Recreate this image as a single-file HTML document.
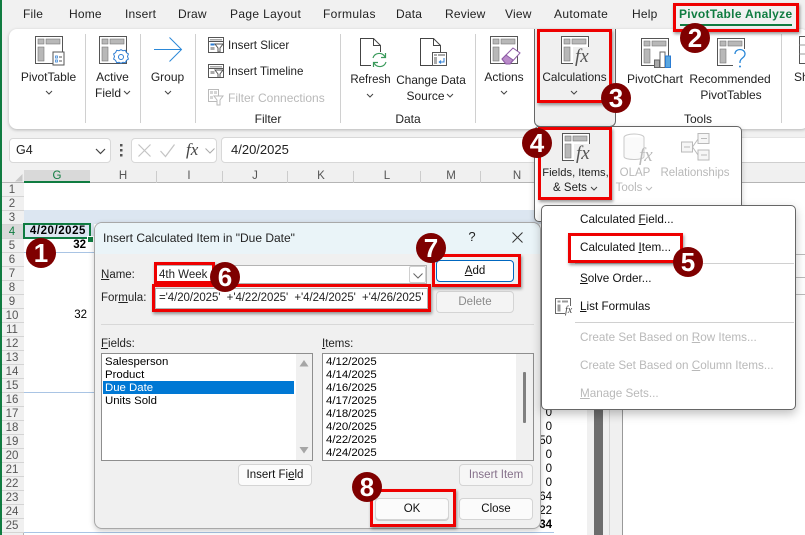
<!DOCTYPE html>
<html><head><meta charset="utf-8"><style>
html,body{margin:0;padding:0}
body{width:805px;height:535px;overflow:hidden;background:#fff;position:relative;font-family:"Liberation Sans",sans-serif;font-size:12px;color:#222}
.a{position:absolute;box-sizing:border-box}
.t{position:absolute;white-space:nowrap;line-height:14px;transform:translateY(-50%)}
.tab{letter-spacing:.2px}
.m{font-size:11.7px}
.c{position:absolute;white-space:nowrap;line-height:14px;transform:translate(-50%,-50%)}
.r{position:absolute;white-space:nowrap;line-height:14px;transform:translate(-100%,-50%);color:#000}
.g{color:#b9b9b9}
.sep{position:absolute;width:1px;top:34px;height:89px;background:#d0d0d0}
.red{position:absolute;box-sizing:border-box;border:3px solid #ee0000;box-shadow:1px 2px 3px rgba(0,0,0,.4)}
.b{position:absolute;width:30px;height:30px;border-radius:50%;background:#7f0000;color:#fff;font-weight:bold;font-size:26px;line-height:30px;text-align:center;font-family:"Liberation Sans",sans-serif}
.btn{position:absolute;box-sizing:border-box;background:#fbfbfb;border:1px solid #d4d4d4;border-radius:4px;text-align:center;font-size:11.5px;line-height:20px;color:#111}
.row{position:absolute;left:0;width:24px;text-align:center;font-size:11.5px;color:#555;height:14px;line-height:14px;background:#f0f0f0;border-bottom:1px solid #d4d4d4;box-sizing:border-box}
.ch{position:absolute;top:176px;font-size:11.5px;color:#555;line-height:14px;transform:translate(-50%,-50%)}
.cs{position:absolute;top:171px;height:12px;width:1px;background:#ccc}
.li{position:absolute;font-size:11.4px;line-height:13px;white-space:nowrap;color:#000}
svg{position:absolute;overflow:visible}
</style></head><body>
<svg width="0" height="0" style="position:absolute"><defs>
<symbol id="pt" viewBox="0 0 28 28"><rect x=".5" y=".5" width="27" height="27" fill="#fff" stroke="#555"/><rect x="3" y="3" width="6" height="5" fill="#b8b8b8" stroke="#777" stroke-width=".6"/><rect x="11" y="3" width="14" height="5" fill="#b8b8b8" stroke="#777" stroke-width=".6"/><rect x="3" y="11" width="6" height="14" fill="#b8b8b8" stroke="#777" stroke-width=".6"/></symbol>
</defs></svg>

<!-- tabs background -->
<div class="a" style="left:0;top:0;width:805px;height:170px;background:#f1f1f1"></div>
<div class="a" style="left:0;top:0;width:2px;height:535px;background:#107c41;z-index:5"></div>
<div class="t tab" style="left:23px;top:14px">File</div>
<div class="t tab" style="left:69px;top:14px">Home</div>
<div class="t tab" style="left:125px;top:14px">Insert</div>
<div class="t tab" style="left:178px;top:14px">Draw</div>
<div class="t tab" style="left:230px;top:14px;letter-spacing:.35px">Page Layout</div>
<div class="t tab" style="left:323px;top:14px;letter-spacing:.35px">Formulas</div>
<div class="t tab" style="left:396px;top:14px">Data</div>
<div class="t tab" style="left:445px;top:14px">Review</div>
<div class="t tab" style="left:505px;top:14px">View</div>
<div class="t tab" style="left:554px;top:14px;letter-spacing:.35px">Automate</div>
<div class="t tab" style="left:632px;top:14px">Help</div>
<div class="t" style="left:679px;top:14px;color:#107c41;font-weight:bold;font-size:12px;letter-spacing:.3px">PivotTable Analyze</div>
<div class="a" style="left:680px;top:24px;width:112px;height:2px;background:#107c41"></div>

<!-- ribbon -->
<div class="a" style="left:9px;top:29px;width:800px;height:100px;background:#fff;border-radius:8px;box-shadow:0 1px 3px rgba(0,0,0,.25)"></div>
<div class="sep" style="left:85px"></div><div class="sep" style="left:140px"></div><div class="sep" style="left:195px"></div><div class="sep" style="left:340px"></div><div class="sep" style="left:475px"></div><div class="sep" style="left:781px"></div>

<svg style="left:35px;top:36px" width="28" height="28"><use href="#pt"/></svg>
<svg style="left:35px;top:36px" width="30" height="30"><rect x="18" y="16" width="11" height="13" fill="#fff" stroke="#555"/><path d="M20.5 20h2v2h-2zM20.5 24h2v2h-2z" fill="none" stroke="#2b7cd3" stroke-width=".7"/><path d="M24 21h3M24 25h3" stroke="#555"/></svg>
<div class="c" style="left:48.5px;top:77px">PivotTable</div>
<svg style="left:45px;top:90px" width="8" height="5"><path d="M1 1l3 3 3-3" fill="none" stroke="#444"/></svg>

<svg style="left:99px;top:36px" width="28" height="28"><use href="#pt"/></svg>
<svg style="left:112px;top:49px" width="18" height="16"><path d="M9 .7l2 1 2.3-.4 1.1 2.3 2 1.4-.9 2.5.9 2.5-2 1.4-1.1 2.3-2.3-.4-2 1-2-1-2.3.4-1.1-2.3-2-1.4.9-2.5-.9-2.5 2-1.4 1.1-2.3 2.3.4z" fill="#fff" stroke="#2b7cd3"/><circle cx="9" cy="8" r="2.5" fill="none" stroke="#2b7cd3"/></svg>
<div class="c" style="left:112.5px;top:77px">Active</div>
<div class="c" style="left:108px;top:93px">Field</div>
<svg style="left:123px;top:90px" width="8" height="5"><path d="M1 1l3 3 3-3" fill="none" stroke="#444"/></svg>

<svg style="left:154px;top:37px" width="29" height="26"><path d="M0 12.5h27.5M15.5 .5l12 12-12 12" fill="none" stroke="#2b88d8" stroke-width="1"/></svg>
<div class="c" style="left:167.5px;top:77px">Group</div>
<svg style="left:164px;top:90px" width="8" height="5"><path d="M1 1l3 3 3-3" fill="none" stroke="#444"/></svg>

<svg style="left:208px;top:37px" width="16" height="16"><rect x=".5" y=".5" width="15" height="15" fill="#fff" stroke="#555"/><path d="M.5 4.5h15" stroke="#555"/><rect x="2" y="2" width="12" height="1.5" fill="#aaa"/><rect x="2.5" y="6.5" width="4" height="2" fill="#2b7cd3"/><rect x="2.5" y="10" width="4" height="3" fill="#aaa"/><path d="M7 7h8l-3 4v4h-2v-4z" fill="#fff" stroke="#555"/></svg>
<div class="t" style="left:228px;top:46px;font-size:11.6px">Insert Slicer</div>
<svg style="left:208px;top:64px" width="16" height="14"><rect x=".5" y=".5" width="15" height="13" fill="#fff" stroke="#555"/><path d="M.5 4.5h15" stroke="#555"/><rect x="2" y="2" width="12" height="1.5" fill="#aaa"/><rect x="2.5" y="7" width="4" height="3" fill="#aaa"/><path d="M7 6h8l-3 4v3.5h-2v-3.500z" fill="#fff" stroke="#555"/></svg>
<div class="t" style="left:228px;top:72px;font-size:11.6px">Insert Timeline</div>
<svg style="left:208px;top:89px" width="16" height="17" opacity=".4"><rect x=".5" y=".5" width="10" height="12" fill="#fff" stroke="#555"/><rect x="2" y="2" width="3" height="3" fill="#999"/><rect x="6" y="2" width="3" height="3" fill="#999"/><rect x="2" y="7" width="3" height="3" fill="#999"/><path d="M6 7h9l-3 4v5h-3v-5z" fill="#fff" stroke="#555"/></svg>
<div class="t g" style="left:228px;top:98px">Filter Connections</div>
<div class="c" style="left:268px;top:119px">Filter</div>

<svg style="left:360px;top:38px" width="28" height="30"><path d="M.5 .5h13l7 7v20h-20z" fill="#fff" stroke="#444"/><path d="M13.5 .5v7h7" fill="none" stroke="#444"/><rect x="11" y="14" width="17" height="16" fill="#fff"/><path d="M13 20a6.5 6.5 0 0 1 12-1M26 24a6.5 6.5 0 0 1-12 1" fill="none" stroke="#3a9a5b" stroke-width="1.2"/><path d="M25.5 15v4.500h-4.500M13.5 29v-4.500h4.500" fill="none" stroke="#3a9a5b" stroke-width="1.2"/></svg>
<div class="c" style="left:370.5px;top:80px;font-size:11.5px">Refresh</div>
<svg style="left:366px;top:93px" width="8" height="5"><path d="M1 1l3 3 3-3" fill="none" stroke="#444"/></svg>

<svg style="left:420px;top:38px" width="28" height="30"><path d="M.5 .5h13l7 7v20h-20z" fill="#fff" stroke="#444"/><path d="M13.5 .5v7h7" fill="none" stroke="#444"/><rect x="12.5" y="14.5" width="14" height="13" fill="#fff" stroke="#555"/><rect x="14" y="16" width="3" height="2" fill="#aaa"/><rect x="18" y="16" width="7" height="2" fill="#aaa"/><rect x="14" y="19" width="3" height="7" fill="#aaa"/><path d="M24 20v4h-4.500M21 22.5l-1.800 1.500 1.800 1.500" fill="none" stroke="#2b7cd3"/></svg>
<div class="c" style="left:431px;top:80px;font-size:11.8px">Change Data</div>
<div class="c" style="left:425.5px;top:96px">Source</div>
<svg style="left:446px;top:93px" width="8" height="5"><path d="M1 1l3 3 3-3" fill="none" stroke="#444"/></svg>
<div class="c" style="left:408px;top:119px">Data</div>

<svg style="left:490px;top:36px" width="28" height="28"><use href="#pt"/></svg>
<svg style="left:501px;top:46px" width="20" height="20"><path d="M1 13L12 2l7 5-10 11H5z" fill="#fff" stroke="#8e5ba6"/><path d="M1 13l4-4 7 5-3 4H5z" fill="#b98bc9" stroke="#8e5ba6"/></svg>
<div class="c" style="left:504px;top:77px">Actions</div>
<svg style="left:500px;top:90px" width="8" height="5"><path d="M1 1l3 3 3-3" fill="none" stroke="#444"/></svg>

<!-- calculations hover -->
<div class="a" style="left:534px;top:29px;width:82px;height:98px;background:#f0f0f0;border:1px solid #666;border-top:0;border-radius:0 0 6px 6px"></div>
<svg style="left:561px;top:36px" width="28" height="28"><use href="#pt"/></svg>
<div class="a" style="left:573px;top:47px;font:italic 19px 'Liberation Serif',serif;color:#555;line-height:19px;background:#f0f0f0;padding:0 0 0 2px">fx</div>
<div class="c" style="left:574.5px;top:77px;font-size:11.8px">Calculations</div>
<svg style="left:570px;top:90px" width="8" height="5"><path d="M1 1l3 3 3-3" fill="none" stroke="#444"/></svg>

<svg style="left:641px;top:38px" width="28" height="28"><use href="#pt"/></svg>
<svg style="left:654px;top:51px" width="18" height="17"><rect x=".5" y="9" width="5" height="7.5" fill="#aaa" stroke="#666"/><rect x="6" y="1" width="5" height="15.5" fill="#fff" stroke="#666"/><rect x="11.5" y="5" width="5" height="11.5" fill="#5aa7e0" stroke="#2b7cd3"/></svg>
<div class="c" style="left:655px;top:79px">PivotChart</div>
<svg style="left:717px;top:38px" width="28" height="28"><use href="#pt"/></svg>
<svg style="left:733px;top:49px" width="14" height="20"><rect width="14" height="20" fill="#fff"/><path d="M2 5c0-6 10-6 10 0 0 4-5 4-5 8v1" fill="none" stroke="#2b88d8" stroke-width="1.3"/><circle cx="7" cy="17.5" r="1" fill="#2b88d8"/></svg>
<div class="c" style="left:730px;top:79px">Recommended</div>
<div class="c" style="left:731px;top:95px">PivotTables</div>
<div class="c" style="left:698px;top:119px">Tools</div>
<svg style="left:799px;top:36px" width="10" height="28"><rect x=".5" y=".5" width="20" height="27" fill="#fff" stroke="#555"/><path d="M.5 9h10M.5 18h10" stroke="#999"/></svg>
<div class="t" style="left:794px;top:77px">Sh</div>

<!-- formula bar -->
<div class="a" style="left:9px;top:138px;width:102px;height:25px;background:#fff;border:1px solid #d8d8d8;border-radius:4px"></div>
<div class="t" style="left:16px;top:150px;font-size:12.5px">G4</div>
<svg style="left:95px;top:148px" width="11" height="7"><path d="M1 1l4.500 4.500L10 1" fill="none" stroke="#444" stroke-width="1.2"/></svg>
<svg style="left:120px;top:144px" width="3" height="14"><path d="M0 0h2.500v2.500H0zM0 5h2.500v2.500H0zM0 10h2.500v2.500H0z" fill="#555"/></svg>
<div class="a" style="left:131px;top:138px;width:86px;height:25px;background:#fff;border:1px solid #d8d8d8;border-radius:4px"></div>
<svg style="left:138px;top:144px" width="13" height="13"><path d="M.5.5l12 12M12.5.5l-12 12" stroke="#c4c4c4" stroke-width="1.2"/></svg>
<svg style="left:160px;top:144px" width="15" height="13"><path d="M.5 7l5 5.500L14.500.5" fill="none" stroke="#c4c4c4" stroke-width="1.2"/></svg>
<div class="a" style="left:186px;top:140px;font:italic 17px 'Liberation Serif',serif;color:#444;line-height:20px">fx</div>
<svg style="left:205px;top:148px" width="10" height="6"><path d="M.5.5l4.500 4.500L9.500.5" fill="none" stroke="#aaa"/></svg>
<div class="a" style="left:221px;top:137px;width:320px;height:26px;background:#fff;border:1px solid #d8d8d8;border-radius:4px"></div>
<div class="t" style="left:231px;top:150px;font-size:13px">4/20/2025</div>
<div class="a" style="left:741px;top:137px;width:64px;height:1px;background:#e4e4e4"></div>
<div class="a" style="left:741px;top:138px;width:64px;height:24px;background:#fff"></div>
<div class="a" style="left:741px;top:162px;width:64px;height:1px;background:#cfcfcf"></div>

<!-- sheet -->
<div class="a" style="left:0;top:170px;width:805px;height:13px;background:#f0f0f0;border-bottom:1px solid #b5b5b5"></div>
<svg style="left:15px;top:174px" width="8" height="8"><path d="M7.5 0v7.500H0z" fill="#c8c8c8"/></svg>
<div class="a" style="left:24px;top:170px;width:66px;height:13px;background:#d9d9d9;border-bottom:2px solid #107c41"></div>
<div class="ch" style="left:57px;color:#107c41">G</div><div class="ch" style="left:123px">H</div><div class="ch" style="left:189px">I</div><div class="ch" style="left:255px">J</div><div class="ch" style="left:321px">K</div><div class="ch" style="left:387px">L</div><div class="ch" style="left:451px">M</div><div class="ch" style="left:517px">N</div>
<div class="cs" style="left:156px"></div><div class="cs" style="left:222px"></div><div class="cs" style="left:287px"></div><div class="cs" style="left:353px"></div><div class="cs" style="left:420px"></div><div class="cs" style="left:480px"></div>

<div class="a" style="left:0;top:183px;width:24px;height:352px;background:#f0f0f0;border-right:1px solid #b5b5b5"></div>
<div class="row" style="top:183px">1</div><div class="row" style="top:197px">2</div><div class="row" style="top:211px">3</div><div class="row" style="top:225px;background:#d9d9d9;color:#107c41">4</div><div class="row" style="top:239px">5</div><div class="row" style="top:253px">6</div><div class="row" style="top:267px">7</div><div class="row" style="top:281px">8</div><div class="row" style="top:295px">9</div><div class="row" style="top:309px">10</div><div class="row" style="top:323px">11</div><div class="row" style="top:337px">12</div><div class="row" style="top:351px">13</div><div class="row" style="top:365px">14</div><div class="row" style="top:379px">15</div><div class="row" style="top:393px">16</div><div class="row" style="top:407px">17</div><div class="row" style="top:421px">18</div><div class="row" style="top:435px">19</div><div class="row" style="top:449px">20</div><div class="row" style="top:463px">21</div><div class="row" style="top:477px">22</div><div class="row" style="top:491px">23</div><div class="row" style="top:505px">24</div><div class="row" style="top:519px">25</div>

<div class="a" style="left:24px;top:210px;width:530px;height:14px;background:#dce6f1"></div>
<div class="a" style="left:24px;top:224px;width:70px;height:14px;background:#dce6f1"></div>
<div class="a" style="left:23px;top:223px;width:68px;height:16px;border:2px solid #107c41"></div>
<div class="a" style="left:87px;top:236px;width:5px;height:5px;background:#107c41;border:1px solid #fff;box-sizing:content-box"></div>
<div class="r" style="left:86px;top:231px;font-weight:bold;font-size:11.5px;letter-spacing:.55px">4/20/2025</div>
<div class="r" style="left:86px;top:245px;font-weight:bold;font-size:11.5px">32</div>
<div class="r" style="left:87px;top:315px;font-size:11.5px">32</div>
<div class="a" style="left:24px;top:252px;width:70px;height:1px;background:#a9c4e4"></div>
<div class="a" style="left:24px;top:392px;width:70px;height:1px;background:#a9c4e4"></div>
<div class="a" style="left:24px;top:532px;width:530px;height:1px;background:#a9c4e4"></div>

<div class="r" style="left:552px;top:413px;font-size:11.5px">0</div><div class="r" style="left:552px;top:427px;font-size:11.5px">0</div><div class="r" style="left:552px;top:441px;font-size:11.5px">50</div><div class="r" style="left:552px;top:455px;font-size:11.5px">0</div><div class="r" style="left:552px;top:469px;font-size:11.5px">0</div><div class="r" style="left:552px;top:483px;font-size:11.5px">0</div><div class="r" style="left:552px;top:497px;font-size:11.5px">64</div><div class="r" style="left:552px;top:511px;font-size:11.5px">22</div><div class="r" style="left:552px;top:525px;font-size:11.5px;font-weight:bold">34</div>

<div class="a" style="left:587px;top:400px;width:36px;height:135px;background:#f0f0f0;border-right:1px solid #999"></div>
<div class="a" style="left:594px;top:400px;width:9px;height:135px;background:#6d6d6d"></div>
<div class="a" style="left:609px;top:400px;width:1px;height:135px;background:#d4d4d4"></div>
<div class="a" style="left:796px;top:254px;width:9px;height:1px;background:#bbb"></div><div class="a" style="left:796px;top:277px;width:9px;height:1px;background:#bbb"></div><div class="a" style="left:796px;top:294px;width:9px;height:1px;background:#bbb"></div>

<!-- dialog -->
<div class="a" style="left:94px;top:222px;width:447px;height:307px;background:#f0f0f0;border:1px solid #a8a8a8;border-radius:8px;box-shadow:0 2px 6px rgba(0,0,0,.2);overflow:hidden"><div class="a" style="left:0;top:0;width:447px;height:31px;background:#eaf4f8"></div></div>
<div class="t" style="left:103px;top:238px;font-size:12px">Insert Calculated Item in "Due Date"</div>
<div class="c" style="left:472px;top:237px;font-size:13px">?</div>
<svg style="left:512px;top:232px" width="11" height="11"><path d="M.5.5l10 10M10.5.5l-10 10" stroke="#333"/></svg>
<div class="t" style="left:101px;top:275px;font-size:11.5px"><u>N</u>ame:</div>
<div class="t" style="left:101px;top:298px;font-size:11.5px">For<u>m</u>ula:</div>
<div class="a" style="left:155px;top:265px;width:272px;height:19px;background:#fff;border:1px solid #b4b4b4"></div>
<div class="a" style="left:409px;top:266px;width:17px;height:17px;background:#fff;border:1px solid #d0d0d0;border-radius:2px"></div>
<svg style="left:413px;top:273px" width="10" height="6"><path d="M.5.5l4.500 4.500L9.500.5" fill="none" stroke="#666"/></svg>
<div class="t" style="left:159px;top:275px;font-size:11.5px">4th Week</div>
<div class="a" style="left:155px;top:288px;width:273px;height:21px;background:#fff;border:1px solid #b4b4b4"></div>
<div class="t" style="left:159px;top:298px;font-size:11.5px;letter-spacing:-.07px">='4/20/2025' &nbsp;+'4/22/2025' &nbsp;+'4/24/2025' &nbsp;+'4/26/2025'</div>
<div class="btn" style="left:436px;top:260px;width:78px;height:22px;border:1.5px solid #0067c0;background:#fff"><u>A</u>dd</div>
<div class="btn" style="left:436px;top:291px;width:78px;height:22px;color:#8a8a8a;background:#f4f4f4">Delete</div>
<div class="a" style="left:101px;top:324px;width:433px;height:1px;background:#d8d8d8"></div>
<div class="t" style="left:101px;top:344px;font-size:11.5px"><u>F</u>ields:</div>
<div class="t" style="left:322px;top:344px;font-size:11.5px"><u>I</u>tems:</div>

<div class="a" style="left:101px;top:353px;width:212px;height:108px;background:#fff;border:1px solid #8e8e8e"></div>
<div class="a" style="left:296px;top:354px;width:16px;height:106px;background:#f0f0f0"></div>
<svg style="left:299px;top:360px" width="10" height="7"><path d="M5 0l4.500 6.500H.5z" fill="#a6a6a6"/></svg>
<svg style="left:299px;top:447px" width="10" height="7"><path d="M5 6.500L9.500 0H.5z" fill="#a6a6a6"/></svg>
<div class="a" style="left:103px;top:381px;width:191px;height:13px;background:#0078d4"></div>
<div class="li" style="left:105px;top:356px">Salesperson</div>
<div class="li" style="left:105px;top:369px">Product</div>
<div class="li" style="left:105px;top:382px;color:#fff">Due Date</div>
<div class="li" style="left:105px;top:395px">Units Sold</div>

<div class="a" style="left:322px;top:353px;width:212px;height:108px;background:#fff;border:1px solid #8e8e8e"></div>
<div class="a" style="left:516px;top:354px;width:17px;height:106px;background:#f0f0f0"></div>
<div class="a" style="left:523px;top:372px;width:3px;height:51px;background:#808080;border-radius:1px"></div>
<div class="li" style="left:326px;top:356px">4/12/2025</div>
<div class="li" style="left:326px;top:369px">4/14/2025</div>
<div class="li" style="left:326px;top:382px">4/16/2025</div>
<div class="li" style="left:326px;top:395px">4/17/2025</div>
<div class="li" style="left:326px;top:408px">4/18/2025</div>
<div class="li" style="left:326px;top:421px">4/20/2025</div>
<div class="li" style="left:326px;top:434px">4/22/2025</div>
<div class="li" style="left:326px;top:447px">4/24/2025</div>

<div class="btn" style="left:238px;top:464px;width:74px;height:22px">Insert Fi<u>e</u>ld</div>
<div class="btn" style="left:459px;top:464px;width:74px;height:22px;color:#85708a;background:#f6f6f6">Insert Item</div>
<div class="btn" style="left:375px;top:498px;width:74px;height:22px;box-shadow:0 1px 0 #ccc">OK</div>
<div class="btn" style="left:459px;top:498px;width:74px;height:22px">Close</div>

<!-- popup -->
<div class="a" style="left:534px;top:126px;width:208px;height:96px;background:#fff;border:1px solid #666;border-radius:5px;box-shadow:0 2px 6px rgba(0,0,0,.2)"></div>
<div class="a" style="left:540px;top:129px;width:72px;height:71px;background:#f0f0f0"></div>
<svg style="left:562px;top:133px" width="28" height="28"><use href="#pt"/></svg>
<div class="a" style="left:574px;top:144px;font:italic 19px 'Liberation Serif',serif;color:#555;line-height:19px;background:#f0f0f0;padding-left:2px">fx</div>
<div class="c" style="left:575.5px;top:173px;font-size:11.2px">Fields, Items,</div>
<div class="c" style="left:570px;top:188px;font-size:11.5px">&amp; Sets</div>
<svg style="left:590px;top:186px" width="8" height="5"><path d="M1 1l3 3 3-3" fill="none" stroke="#444"/></svg>
<svg style="left:623px;top:133px" width="28" height="30" opacity=".45"><ellipse cx="11" cy="4.5" rx="10" ry="3.5" fill="#fff" stroke="#888"/><path d="M1 4.500v19c0 4 20 4 20 0v-19" fill="#f4f4f4" stroke="#888"/></svg>
<div class="a g" style="left:639px;top:146px;font:italic 19px 'Liberation Serif',serif;line-height:20px">fx</div>
<div class="c g" style="left:635px;top:173px;font-size:11.5px">OLAP</div>
<div class="c g" style="left:629px;top:188px;font-size:11.5px">Tools</div>
<svg style="left:645px;top:186px" width="8" height="5"><path d="M1 1l3 3 3-3" fill="none" stroke="#bbb"/></svg>
<svg style="left:681px;top:133px" width="29" height="28" opacity=".5"><rect x=".5" y="9" width="11" height="10" fill="#eee" stroke="#777"/><rect x="17" y=".5" width="11" height="10" fill="#eee" stroke="#777"/><rect x="17" y="17" width="11" height="10" fill="#eee" stroke="#777"/><path d="M11.5 14L17 6M11.5 14L17 22M3 14h6M20 5.5h6M20 22h6" stroke="#777" fill="none"/></svg>
<div class="c g" style="left:695px;top:173px;font-size:11.5px">Relationships</div>

<!-- menu -->
<div class="a" style="left:541px;top:205px;width:255px;height:205px;background:#fff;border:1px solid #666;border-radius:5px;box-shadow:0 4px 10px rgba(0,0,0,.25)"></div>
<div class="t m" style="left:580px;top:220px;color:#111">Calculated <u>F</u>ield...</div>
<div class="t m" style="left:580px;top:248px;color:#111">Calculated <u>I</u>tem...</div>
<div class="a" style="left:575px;top:263px;width:219px;height:1px;background:#d0d0d0"></div>
<div class="t m" style="left:580px;top:279px;color:#111"><u>S</u>olve Order...</div>
<svg style="left:555px;top:298px" width="16" height="16"><rect x=".5" y=".5" width="15" height="15" fill="#fff" stroke="#666"/><rect x="2.5" y="2.5" width="3" height="2" fill="#999"/><rect x="7" y="2.5" width="6" height="2" fill="#999"/><rect x="2.5" y="6.5" width="3" height="7" fill="#999"/></svg>
<div class="a" style="left:565px;top:306px;font:italic 10px 'Liberation Serif',serif;color:#444;line-height:10px;background:#fff">fx</div>
<div class="t m" style="left:580px;top:307px;color:#111"><u>L</u>ist Formulas</div>
<div class="a" style="left:575px;top:322px;width:219px;height:1px;background:#d0d0d0"></div>
<div class="t g m" style="left:580px;top:338px">Create Set Based on <u>R</u>ow Items...</div>
<div class="t g m" style="left:580px;top:366px">Create Set Based on <u>C</u>olumn Items...</div>
<div class="t g m" style="left:580px;top:394px"><u>M</u>anage Sets...</div>

<!-- annotations -->
<div class="red" style="left:673px;top:3px;width:126px;height:29px"></div>
<div class="red" style="left:537px;top:29px;width:75px;height:74px"></div>
<div class="red" style="left:538px;top:127px;width:74px;height:73px"></div>
<div class="red" style="left:568px;top:233px;width:115px;height:30px"></div>
<div class="red" style="left:154px;top:262px;width:61px;height:22px"></div>
<div class="red" style="left:152px;top:284px;width:279px;height:28px"></div>
<div class="red" style="left:432px;top:254px;width:89px;height:33px"></div>
<div class="red" style="left:370px;top:489px;width:86px;height:38px"></div>

<div class="b" style="left:26px;top:238px">1</div>
<div class="b" style="left:680px;top:23px">2</div>
<div class="b" style="left:601px;top:83px">3</div>
<div class="b" style="left:522px;top:128px">4</div>
<div class="b" style="left:673px;top:247px">5</div>
<div class="b" style="left:210px;top:262px">6</div>
<div class="b" style="left:416px;top:233px">7</div>
<div class="b" style="left:352px;top:472px">8</div>
</body></html>
